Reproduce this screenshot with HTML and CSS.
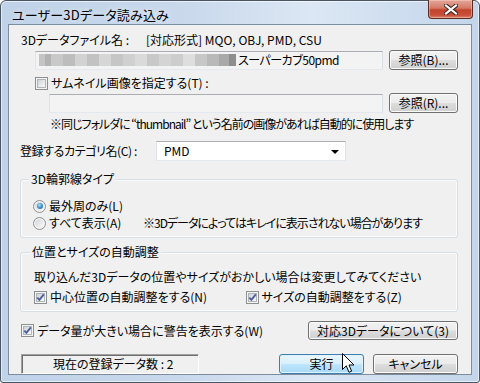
FILE: index.html
```html
<!DOCTYPE html>
<html lang="ja">
<head>
    <meta charset="UTF-8">
    <title>ユーザー3Dデータ読み込み</title>
    <link rel="stylesheet" href="styles.css">
</head>
<body>
    <div class="window">
        <div class="title-bar">
            <div class="title-text">ユーザー3Dデータ読み込み</div>
            <div class="close-button">
                <svg width="14" height="11" viewBox="0 0 14 11">
                    <path d="M2 1.5 L12 9.5 M12 1.5 L2 9.5" stroke="#3b2320" stroke-width="4.2" stroke-linecap="square"/>
                    <path d="M2 1.5 L12 9.5 M12 1.5 L2 9.5" stroke="#fff" stroke-width="2.2" stroke-linecap="square"/>
                </svg>
            </div>
        </div>

        <div class="client">
            <!-- ファイル -->
            <div class="row row-label">
                <span class="file-label">3Dデータファイル名 :</span>
                <span>[対応形式] MQO, OBJ, PMD, CSU</span>
            </div>
            <div class="row row-field indent">
                <div class="text-field readonly">
                    <span class="mosaic"></span><span class="file-name">スーパーカブ50pmd</span>
                </div>
                <button class="btn browse">参照(B)...</button>
            </div>

            <!-- サムネイル -->
            <div class="row row-check indent">
                <span class="check"></span>
                <span class="check-text">サムネイル画像を指定する(T) :</span>
            </div>
            <div class="row row-field indent2">
                <div class="text-field readonly"></div>
                <button class="btn browse">参照(R)...</button>
            </div>
            <div class="row row-note indent2">
                <span class="note">※同じフォルダに “thumbnail” という名前の画像があれば自動的に使用します</span>
            </div>

            <!-- カテゴリ -->
            <div class="row row-field row-category">
                <span class="category-label">登録するカテゴリ名(C) :</span>
                <div class="combo">
                    <span>PMD</span>
                    <span class="combo-arrow"></span>
                </div>
            </div>

            <!-- 輪郭線 -->
            <div class="group group-outline">
                <div class="group-title">3D輪郭線タイプ</div>
                <div class="group-row first">
                    <span class="radio-item">
                        <span class="radio selected"></span>
                        <span class="check-text">最外周のみ(L)</span>
                    </span>
                </div>
                <div class="group-row">
                    <span class="radio-item">
                        <span class="radio"></span>
                        <span class="check-text">すべて表示(A)</span>
                    </span>
                    <span class="note">※3Dデータによってはキレイに表示されない場合があります</span>
                </div>
            </div>

            <!-- 自動調整 -->
            <div class="group group-adjust">
                <div class="group-title">位置とサイズの自動調整</div>
                <div class="group-row first text-row">取り込んだ3Dデータの位置やサイズがおかしい場合は変更してみてください</div>
                <div class="group-row check-row">
                    <span class="check-item">
                        <span class="check checked"></span>
                        <span class="check-text">中心位置の自動調整をする(N)</span>
                    </span>
                    <span class="check-item">
                        <span class="check checked"></span>
                        <span class="check-text">サイズの自動調整をする(Z)</span>
                    </span>
                </div>
            </div>

            <div class="row row-button row-warning">
                <span class="check checked"></span>
                <span class="check-text">データ量が大きい場合に警告を表示する(W)</span>
                <button class="btn about">対応3Dデータについて(3)</button>
            </div>

            <div class="row row-button row-bottom">
                <div class="status">現在の登録データ数 : 2</div>
                <button class="btn ok focus">実行</button>
                <button class="btn cancel">キャンセル</button>
            </div>
        </div>
    </div>

    <svg class="cursor" width="13" height="21" viewBox="0 0 13 21">
        <path d="M0.5 0.5 L0.5 16.5 L4.3 12.8 L7 19.3 L9.6 18.2 L7 12 L12 12 Z" fill="#fff" stroke="#000" stroke-width="1" stroke-linejoin="miter"/>
    </svg>
</body>
</html>
```

FILE: styles.css
```css
body {
    margin: 0;
    background: #fff;
    font-family: "Noto Sans CJK JP", sans-serif;
    font-size: 12px;
    font-feature-settings: "palt";
    color: #000;
    position: relative;
}

.window {
    width: 480px;
    height: 383px;
    box-sizing: border-box;
    border: 1px solid #4a5563;
    border-radius: 6px 6px 3px 3px;
    background: linear-gradient(to right, #bfd2e8 0%, #cad9ec 40%, #dbe7f4 65%, #c3d5ea 100%);
    box-shadow: inset 0 0 0 1px rgba(255, 255, 255, 0.6);
    padding: 0 7px 7px 7px;
    display: flex;
    flex-direction: column;
}

.title-bar {
    height: 29px;
    display: flex;
    align-items: flex-start;
}

.title-text {
    padding: 5px 0 0 4px;
    font-size: 13px;
    line-height: 17px;
    letter-spacing: 0.2px;
    color: #000;
    text-shadow: 0 0 6px rgba(255, 255, 255, 0.9);
}

.close-button {
    margin-left: auto;
    margin-right: -1px;
    margin-top: -1px;
    width: 45px;
    height: 19px;
    box-sizing: border-box;
    border: 1px solid #5b2a22;
    border-top: none;
    border-radius: 0 0 4px 4px;
    background: linear-gradient(#e3a89b 0%, #d37a66 45%, #c2432b 55%, #c9503a 85%, #d98a6e 100%);
    box-shadow: inset 0 0 0 1px rgba(255, 210, 200, 0.45);
    display: flex;
    align-items: center;
    justify-content: center;
}

.client {
    flex: 1;
    border: 1px solid #7d8d9f;
    background: #f0f0f0;
    padding: 0 13px 0 11px;
}

.row {
    display: flex;
    align-items: center;
    line-height: 14px;
}

.row-label {
    margin-top: 8px;
    height: 14px;
}

.file-label {
    width: 125px;
    padding-left: 1px;
}

.row-field {
    height: 20px;
    margin-top: 3px;
}

.indent {
    padding-left: 15px;
}

.indent2 {
    padding-left: 29px;
}

.text-field {
    flex: 1;
    height: 19px;
    box-sizing: border-box;
    border: 1px solid #abadb3;
    border-color: #abadb3 #dbdfe6 #e3e9ef #e2e3ea;
    background: #fff;
    margin-right: 6px;
    display: flex;
    align-items: center;
    padding-left: 3px;
}

.text-field.readonly {
    background: #f3f3f3;
}

.mosaic {
    width: 197px;
    height: 12px;
    background: linear-gradient(to right,
        #c4c4c4 0 6px, #b2b2b2 6px 12px, #c9c9c9 12px 24px, #bdbdbd 24px 36px,
        #d2d2d2 36px 48px, #c2c2c2 48px 60px, #d6d6d6 60px 72px, #c6c6c6 72px 84px,
        #d0d0d0 84px 96px, #dadada 96px 108px, #c8c8c8 108px 120px, #d4d4d4 120px 132px,
        #cdcdcd 132px 144px, #dedede 144px 156px, #c7c7c7 156px 168px, #b9b9b9 168px 180px,
        #a9a9a9 180px 190px, #8e8e8e 190px 197px);
}

.file-name {
    padding-left: 2px;
    letter-spacing: -0.5px;
}

.btn {
    height: 20px;
    box-sizing: border-box;
    border: 1px solid #707070;
    border-radius: 3px;
    background: linear-gradient(#f2f2f2 0%, #ebebeb 48%, #dddddd 52%, #cfcfcf 100%);
    box-shadow: inset 0 0 0 1px #fbfbfb;
    font-family: inherit;
    font-size: 12px;
    font-feature-settings: "palt";
    line-height: 14px;
    color: #000;
    padding: 0;
}

.btn.focus {
    border-color: #3c7fb1;
    background: linear-gradient(#eaf6fd 0%, #d9f0fc 48%, #bee6fd 52%, #a7d9f5 100%);
    box-shadow: inset 0 0 0 1px #e0f2fc;
}

.browse {
    width: 69px;
}

.row-check {
    margin-top: 6px;
    height: 14px;
}

.check {
    width: 13px;
    height: 13px;
    box-sizing: border-box;
    border: 1px solid #8e8f8f;
    background: #f4f4f4;
    position: relative;
    flex-shrink: 0;
}

.check::before {
    content: "";
    position: absolute;
    left: 1px;
    top: 1px;
    width: 9px;
    height: 9px;
    box-sizing: border-box;
    border: 1px solid #b0b5bb;
    background: linear-gradient(135deg, #cdd1d6 0%, #e8e9eb 55%, #fafafa 100%);
}

.check.checked::after {
    content: "";
    position: absolute;
    left: 1px;
    top: 1px;
    width: 9px;
    height: 9px;
    background: url("data:image/svg+xml;utf8,<svg xmlns='http://www.w3.org/2000/svg' width='9' height='9' viewBox='0 0 9 9'><path d='M1.3 4.6 L3.4 6.8 L7.8 1.4' fill='none' stroke='%234a5f9c' stroke-width='1.9'/></svg>") no-repeat;
}

.check-text {
    padding-left: 3px;
}

.note {
    letter-spacing: -1px;
}

.row-note {
    margin-top: 4px;
    height: 14px;
    padding-left: 30px;
}

.row-category {
    margin-top: 10px;
}

.category-label {
    width: 136px;
    letter-spacing: -0.4px;
}

.combo {
    width: 190px;
    height: 20px;
    box-sizing: border-box;
    border: 1px solid #abadb3;
    border-color: #abadb3 #dbdfe6 #e3e9ef #e2e3ea;
    background: #fff;
    display: flex;
    align-items: center;
    padding: 0 6px 0 7px;
}

.combo-arrow {
    margin-left: auto;
    width: 0;
    height: 0;
    border-left: 4px solid transparent;
    border-right: 4px solid transparent;
    border-top: 4px solid #000;
    margin-top: 1px;
}

.group {
    border: 1px solid #d5dfe5;
    border-radius: 3px;
    box-shadow: inset 0 0 0 1px #fbfbfb;
    padding: 0 0 7px 12px;
    line-height: 14px;
}

.group-outline {
    margin-top: 18px;
}

.group-adjust {
    margin-top: 14px;
    padding-left: 13px;
}

.group-title {
    display: inline-block;
    margin: -8px 0 0 -4px;
    padding: 0 2px;
    background: #f0f0f0;
    vertical-align: top;
}

.group-row {
    display: flex;
    align-items: center;
    height: 14px;
    margin-top: 3px;
}

.group-row.first {
    margin-top: 5px;
}

.group-adjust .text-row {
    margin-top: 3px;
}

.group-adjust .check-row {
    margin-top: 6px;
}

.radio-item {
    width: 110px;
    display: flex;
    align-items: center;
}

.radio {
    width: 13px;
    height: 13px;
    box-sizing: border-box;
    border: 1px solid #8e8f8f;
    border-radius: 50%;
    background: linear-gradient(135deg, #cfd3d8 0%, #eaeaec 55%, #fbfbfb 100%);
    box-shadow: inset 0 0 0 1px #f6f6f6;
    position: relative;
    flex-shrink: 0;
}

.radio.selected::after {
    content: "";
    position: absolute;
    left: 2.5px;
    top: 2.5px;
    width: 6px;
    height: 6px;
    border-radius: 50%;
    background: radial-gradient(circle at 40% 35%, #b3e6fb 0%, #3f9bd6 45%, #17548e 100%);
}

.check-item {
    width: 212px;
    display: flex;
    align-items: center;
}

.row-button {
    height: 19px;
}

.row-warning {
    margin-top: 9px;
    padding-left: 1px;
}

.about {
    margin-left: auto;
    width: 150px;
    height: 19px;
}

.row-bottom {
    margin-top: 14px;
    height: 20px;
}

.status {
    width: 178px;
    height: 20px;
    box-sizing: border-box;
    border: 1px solid;
    border-color: #a0a0a0 #ffffff #ffffff #a0a0a0;
    box-shadow: inset 1px 1px 0 #6f6f6f;
    padding-left: 31px;
    line-height: 17px;
    margin-left: 1px;
}

.ok {
    margin-left: auto;
    width: 85px;
}

.cancel {
    margin-left: 9px;
    width: 85px;
}

.cursor {
    position: absolute;
    left: 342px;
    top: 353px;
}
```
